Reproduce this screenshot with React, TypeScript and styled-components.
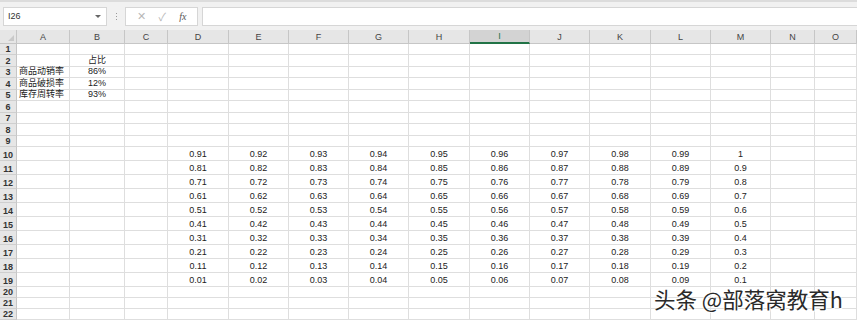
import styled, { createGlobalStyle } from 'styled-components';

const GlobalStyle = createGlobalStyle`
  html, body {
    margin: 0;
    padding: 0;
    background: #ffffff;
    font-family: "Liberation Sans", Arial, "Noto Sans CJK SC", sans-serif;
    overflow: hidden;
  }
`;

const COLS = ['A', 'B', 'C', 'D', 'E', 'F', 'G', 'H', 'I', 'J', 'K', 'L', 'M', 'N', 'O'];
// first entry is the row header strip
const COL_WIDTHS = [17, 53, 55, 43, 61, 60, 60, 60, 61, 60, 60, 61, 60, 60, 44, 42];
const ROW_HEIGHTS = [11, 12, 11, 12, 11, 12, 11, 12, 11, 14, 14, 14, 14, 14, 14, 14, 14, 14, 14, 11, 11, 11];

const Page = styled.div`
  position: relative;
  width: 857px;
  height: 322px;
  overflow: hidden;
`;

const FormulaBar = styled.div`
  box-sizing: border-box;
  height: 30px;
  display: flex;
  align-items: center;
  gap: 4px;
  padding: 0 0 0 3px;
  background: #f1f1f1;
  border-top: 2px solid #dcdcdc;
`;

const NameBox = styled.div`
  box-sizing: border-box;
  width: 104px;
  height: 19px;
  display: flex;
  align-items: center;
  justify-content: space-between;
  padding: 0 5px 0 4px;
  background: #fff;
  border: 1px solid #d6d6d6;
  font-size: 9px;
  color: #333;
`;

const Caret = styled.span`
  width: 0;
  height: 0;
  border-left: 3px solid transparent;
  border-right: 3px solid transparent;
  border-top: 3px solid #666;
`;

const Grip = styled.div`
  width: 10px;
  display: flex;
  flex-direction: column;
  align-items: center;
  gap: 2px;

  span {
    width: 1px;
    height: 1px;
    background: #999;
  }
`;

const ActionBox = styled.div`
  box-sizing: border-box;
  width: 73px;
  height: 19px;
  display: flex;
  align-items: center;
  justify-content: space-around;
  padding: 0 4px;
  background: #fff;
  border: 1px solid #d6d6d6;
  color: #b8b8b8;
  font-size: 11px;
`;

const Fx = styled.span`
  font-family: "Liberation Serif", serif;
  font-style: italic;
  font-size: 10px;
  color: #555;
`;

const FormulaInput = styled.div`
  flex: 1;
  height: 19px;
  box-sizing: border-box;
  background: #fff;
  border: 1px solid #d6d6d6;
  border-right: none;
`;

const Sheet = styled.div`
  display: grid;
  grid-template-columns: ${COL_WIDTHS.map((w) => `${w}px`).join(' ')};
  grid-template-rows: 14px ${ROW_HEIGHTS.map((h) => `${h}px`).join(' ')};
`;

const Corner = styled.div`
  box-sizing: border-box;
  background: #e6e6e6;
  border-right: 1px solid #c6c6c6;
  border-bottom: 1px solid #c6c6c6;
  position: relative;

  &::after {
    content: '';
    position: absolute;
    right: 2px;
    bottom: 2px;
    border-left: 6px solid transparent;
    border-bottom: 6px solid #c9c9c9;
  }
`;

const ColHead = styled.div<{ $active?: boolean }>`
  box-sizing: border-box;
  display: flex;
  align-items: center;
  justify-content: center;
  background: ${(p) => (p.$active ? '#d3d3d3' : '#e6e6e6')};
  border-right: 1px solid #c6c6c6;
  border-bottom: ${(p) => (p.$active ? '2px solid #217346' : '1px solid #c6c6c6')};
  color: ${(p) => (p.$active ? '#217346' : '#444')};
  font-size: 9px;
`;

const RowHead = styled.div`
  box-sizing: border-box;
  display: flex;
  align-items: flex-end;
  justify-content: center;
  background: #e6e6e6;
  border-right: 1px solid #c6c6c6;
  border-bottom: 1px solid #cfcfcf;
  color: #333;
  font-size: 9px;
  font-weight: bold;
  line-height: 10px;
`;

const Cell = styled.div<{ $align?: 'left' | 'center' }>`
  box-sizing: border-box;
  display: flex;
  align-items: flex-end;
  justify-content: ${(p) => (p.$align === 'left' ? 'flex-start' : 'center')};
  padding-left: ${(p) => (p.$align === 'left' ? '2px' : '0')};
  border-right: 1px solid #dedede;
  border-bottom: 1px solid #dedede;
  color: #222;
  font-size: 9px;
  line-height: 11px;
  white-space: nowrap;
`;

const Watermark = styled.div`
  position: absolute;
  left: 654px;
  top: 288px;
  font-family: "Noto Sans CJK SC", sans-serif;
  font-size: 21.5px;
  line-height: 22px;
  color: #2a2a2a;
  text-shadow: 0 0 2px #fff, 0 0 2px #fff, 1px 1px 0 #fff;
  white-space: nowrap;
`;

const labels: Record<string, string> = {
  '2B': '占比',
  '3A': '商品动销率',
  '3B': '86%',
  '4A': '商品破损率',
  '4B': '12%',
  '5A': '库存周转率',
  '5B': '93%',
};

function cellValue(row: number, col: number): string {
  const key = `${row}${COLS[col]}`;
  if (labels[key]) return labels[key];
  if (row >= 10 && row <= 19 && col >= 3 && col <= 12) {
    const v = (19 - row) * 10 + (col - 2);
    return String(Number((v / 100).toFixed(2)));
  }
  return '';
}

export default function App() {
  return (
    <Page>
      <GlobalStyle />
      <FormulaBar>
        <NameBox>
          I26
          <Caret />
        </NameBox>
        <Grip>
          <span />
          <span />
          <span />
        </Grip>
        <ActionBox>
          <span>✕</span>
          <span>✓</span>
          <Fx>fx</Fx>
        </ActionBox>
        <FormulaInput />
      </FormulaBar>
      <Sheet>
        <Corner />
        {COLS.map((c) => (
          <ColHead key={c} $active={c === 'I'}>
            {c}
          </ColHead>
        ))}
        {ROW_HEIGHTS.map((_, i) => {
          const row = i + 1;
          return [
            <RowHead key={`h${row}`}>{row}</RowHead>,
            ...COLS.map((c, ci) => (
              <Cell key={`${row}-${c}`} $align={ci === 0 ? 'left' : 'center'}>
                {cellValue(row, ci)}
              </Cell>
            )),
          ];
        })}
      </Sheet>
      <Watermark>头条 @部落窝教育h</Watermark>
    </Page>
  );
}
